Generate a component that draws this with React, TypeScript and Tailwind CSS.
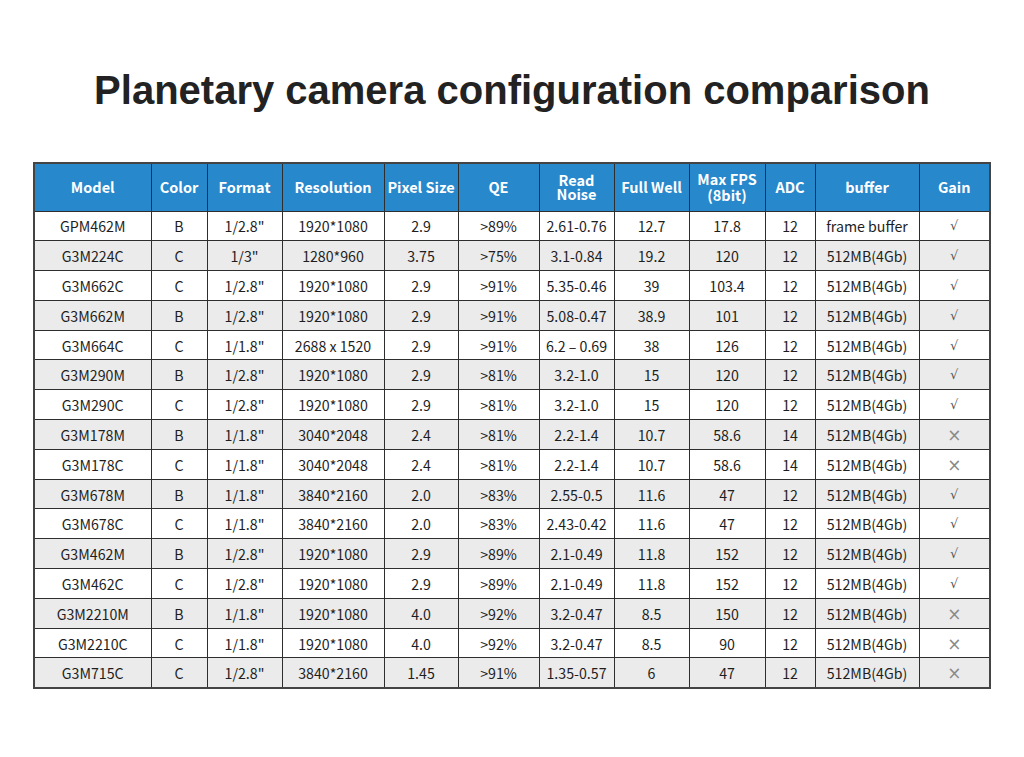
const cols = [117, 56, 75, 102, 74, 81, 75, 75, 76, 50, 104, 71];

const headers: React.ReactNode[] = [
  "Model",
  "Color",
  "Format",
  "Resolution",
  "Pixel Size",
  "QE",
  <span className="block leading-[14px]">Read<br />Noise</span>,
  "Full Well",
  <span className="block leading-[16px]">Max FPS<br />(8bit)</span>,
  "ADC",
  "buffer",
  "Gain",
];

const rows: string[][] = [
  ["GPM462M", "B", '1/2.8"', "1920*1080", "2.9", ">89%", "2.61-0.76", "12.7", "17.8", "12", "frame buffer", "√"],
  ["G3M224C", "C", '1/3"', "1280*960", "3.75", ">75%", "3.1-0.84", "19.2", "120", "12", "512MB(4Gb)", "√"],
  ["G3M662C", "C", '1/2.8"', "1920*1080", "2.9", ">91%", "5.35-0.46", "39", "103.4", "12", "512MB(4Gb)", "√"],
  ["G3M662M", "B", '1/2.8"', "1920*1080", "2.9", ">91%", "5.08-0.47", "38.9", "101", "12", "512MB(4Gb)", "√"],
  ["G3M664C", "C", '1/1.8"', "2688 x 1520", "2.9", ">91%", "6.2 – 0.69", "38", "126", "12", "512MB(4Gb)", "√"],
  ["G3M290M", "B", '1/2.8"', "1920*1080", "2.9", ">81%", "3.2-1.0", "15", "120", "12", "512MB(4Gb)", "√"],
  ["G3M290C", "C", '1/2.8"', "1920*1080", "2.9", ">81%", "3.2-1.0", "15", "120", "12", "512MB(4Gb)", "√"],
  ["G3M178M", "B", '1/1.8"', "3040*2048", "2.4", ">81%", "2.2-1.4", "10.7", "58.6", "14", "512MB(4Gb)", "×"],
  ["G3M178C", "C", '1/1.8"', "3040*2048", "2.4", ">81%", "2.2-1.4", "10.7", "58.6", "14", "512MB(4Gb)", "×"],
  ["G3M678M", "B", '1/1.8"', "3840*2160", "2.0", ">83%", "2.55-0.5", "11.6", "47", "12", "512MB(4Gb)", "√"],
  ["G3M678C", "C", '1/1.8"', "3840*2160", "2.0", ">83%", "2.43-0.42", "11.6", "47", "12", "512MB(4Gb)", "√"],
  ["G3M462M", "B", '1/2.8"', "1920*1080", "2.9", ">89%", "2.1-0.49", "11.8", "152", "12", "512MB(4Gb)", "√"],
  ["G3M462C", "C", '1/2.8"', "1920*1080", "2.9", ">89%", "2.1-0.49", "11.8", "152", "12", "512MB(4Gb)", "√"],
  ["G3M2210M", "B", '1/1.8"', "1920*1080", "4.0", ">92%", "3.2-0.47", "8.5", "150", "12", "512MB(4Gb)", "×"],
  ["G3M2210C", "C", '1/1.8"', "1920*1080", "4.0", ">92%", "3.2-0.47", "8.5", "90", "12", "512MB(4Gb)", "×"],
  ["G3M715C", "C", '1/2.8"', "3840*2160", "1.45", ">91%", "1.35-0.57", "6", "47", "12", "512MB(4Gb)", "×"],
];

export default function App() {
  return (
    <div className="w-[1024px] h-[757px] bg-white flex flex-col items-center">
      <h1 className="mt-[68px] text-[40px] leading-[44px] font-bold text-[#222] font-['Liberation_Sans',Arial,sans-serif]">
        Planetary camera configuration comparison
      </h1>

      {/* Spec table */}
      <table className="mt-[50px] table-fixed border-collapse border-2 border-[#444] font-['Noto_Sans_CJK_SC','Noto_Sans',sans-serif] text-[14.2px] text-[#1e1e1e]">
        <colgroup>
          {cols.map((w, i) => (
            <col key={i} style={{ width: w }} />
          ))}
        </colgroup>
        <thead>
          <tr className="h-[48px] bg-[#2788cc]">
            {headers.map((h, i) => (
              <th key={i} className="border-[1.5px] border-[#2e2e2e] p-0 text-center font-bold text-white text-[14.5px] whitespace-nowrap">
                {h}
              </th>
            ))}
          </tr>
        </thead>
        <tbody>
          {rows.map((r, ri) => (
            <tr key={ri} className={`h-[29.8px] ${ri % 2 === 1 ? "bg-[#ebebeb]" : "bg-white"}`}>
              {r.map((c, ci) => (
                <td
                  key={ci}
                  className={`border-[1.5px] border-[#2e2e2e] p-0 pt-[1px] text-center whitespace-nowrap leading-[20px] ${
                    ci === 11
                      ? c === "×"
                        ? "text-[#8a8a8a] text-[17px] font-['DejaVu_Sans',sans-serif]"
                        : "text-[#555] text-[13px] font-['DejaVu_Sans',sans-serif]"
                      : ""
                  }`}
                >
                  {c}
                </td>
              ))}
            </tr>
          ))}
        </tbody>
      </table>
    </div>
  );
}
